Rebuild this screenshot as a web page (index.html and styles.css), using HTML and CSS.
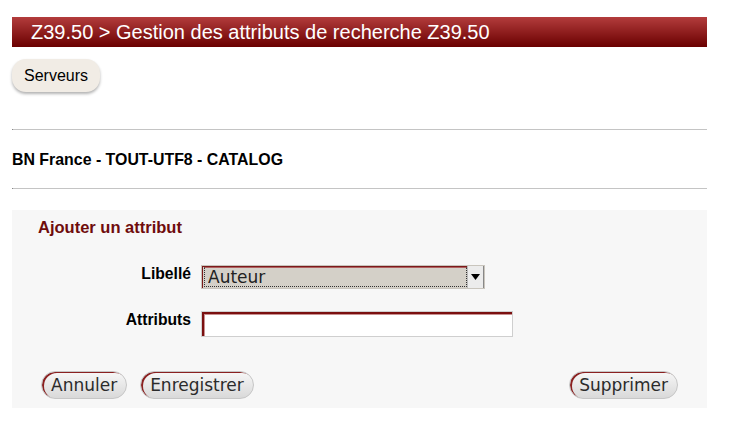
FILE: index.html
```html
<!DOCTYPE html>
<html lang="fr">
<head>
<meta charset="utf-8">
<title>Z39.50</title>
<link rel="stylesheet" href="styles.css">
</head>
<body>
<div class="page">
  <h1 class="bar">Z39.50 &gt; Gestion des attributs de recherche Z39.50</h1>
  <div class="toolbar"><button class="pill">Serveurs</button></div>
  <hr class="rule rule-top">
  <h2 class="server">BN France - TOUT-UTF8 - CATALOG</h2>
  <hr class="rule">
  <form class="box">
    <h3 class="box-title">Ajouter un attribut</h3>
    <div class="fields">
      <label class="lbl">Libellé</label>
      <div class="select-wrap">
        <select class="select"><option>Auteur</option></select>
        <span class="arrow"><svg width="9" height="6" viewBox="0 0 9 6"><path d="M0 0H9L4.5 6Z" fill="#000"/></svg></span>
      </div>
      <label class="lbl">Attributs</label>
      <input class="text" type="text">
    </div>
    <div class="actions">
      <div class="left">
        <button type="button" class="btn">Annuler</button>
        <button type="button" class="btn">Enregistrer</button>
      </div>
      <button type="button" class="btn">Supprimer</button>
    </div>
  </form>
</div>
</body>
</html>
```
FILE: styles.css
```css
html, body { margin: 0; padding: 0; background: #fff; }
body { font-family: "Liberation Sans", Arial, sans-serif; color: #000; }
.page { width: 695px; margin-left: 12px; padding-top: 17px; }
.bar {
  margin: 0; height: 30px; line-height: 30px; padding-left: 19px;
  font-size: 20px; font-weight: normal; color: #fff;
  background: linear-gradient(#b33c3c, #6a0000);
}
.toolbar { margin-top: 12px; }
.pill {
  font-family: "Liberation Sans", Arial, sans-serif; font-size: 16px; color: #000;
  width: 88px; height: 33px; border: none; border-radius: 14px;
  background: #f1ece5; box-shadow: 0 2px 3px rgba(0,0,0,0.3);
  padding: 0;
}
.rule { margin: 0; border: none; height: 1px; background: #c4c4c4; border-left: 1px solid #888; }
.rule-top { margin-top: 37px; }
.server { margin: 0; height: 58px; line-height: 60px; font-size: 15.9px; font-weight: bold; }
.box { margin-top: 21px; background: #f7f7f7; padding: 8px 0 9px; }
.box-title { margin: 0 0 0 26px; font-size: 16.5px; font-weight: bold; color: #6f0c0c; line-height: 18px; }
.fields {
  display: grid; grid-template-columns: 179px 312px; column-gap: 10px;
  row-gap: 22px; margin-top: 29px; align-items: start;
}
.lbl { text-align: right; font-size: 15.7px; font-weight: bold; line-height: 16px; padding-top: 1px; }
.select-wrap {
  display: flex; width: 284px; height: 24px; box-sizing: border-box;
  border: 1px solid #c9c5bd; background: #d4d0c8;
  box-shadow: inset 1px 1px 0 #7a1a1a;
}
.select {
  appearance: none; -webkit-appearance: none; flex: 1; border: 1px dotted #333;
  margin: 1px 0 1px 2px; padding: 0 3px; background: transparent;
  font-family: "DejaVu Sans", sans-serif; font-size: 17px; color: #222; height: 20px; line-height: 18px;
  border-top: 1px solid #b06060;
}
.arrow {
  width: 15px; display: flex; align-items: center; justify-content: center;
  background: #ececec; border-left: 1px solid #bbb; border-right: 1px solid #888;
}
.text {
  width: 312px; height: 26px; box-sizing: border-box; margin: 0;
  border: 1px solid #cfcfcf; background: #fff;
  box-shadow: inset 2px 2px 0 #7a1010, inset 3px 3px 0 #c89090;
}
.actions { display: flex; justify-content: space-between; margin: 34px 29px 0 29px; }
.left { display: flex; gap: 13px; }
.btn {
  font-family: "DejaVu Sans", sans-serif; font-size: 17px; color: #2b2b2b;
  height: 28px; padding: 0 9px; border: 1px solid #c6c6c6; border-radius: 14px;
  background: linear-gradient(#f7f7f7, #d9d9d9);
  box-shadow: inset 2px 1px 0 #8a2020;
}
```
